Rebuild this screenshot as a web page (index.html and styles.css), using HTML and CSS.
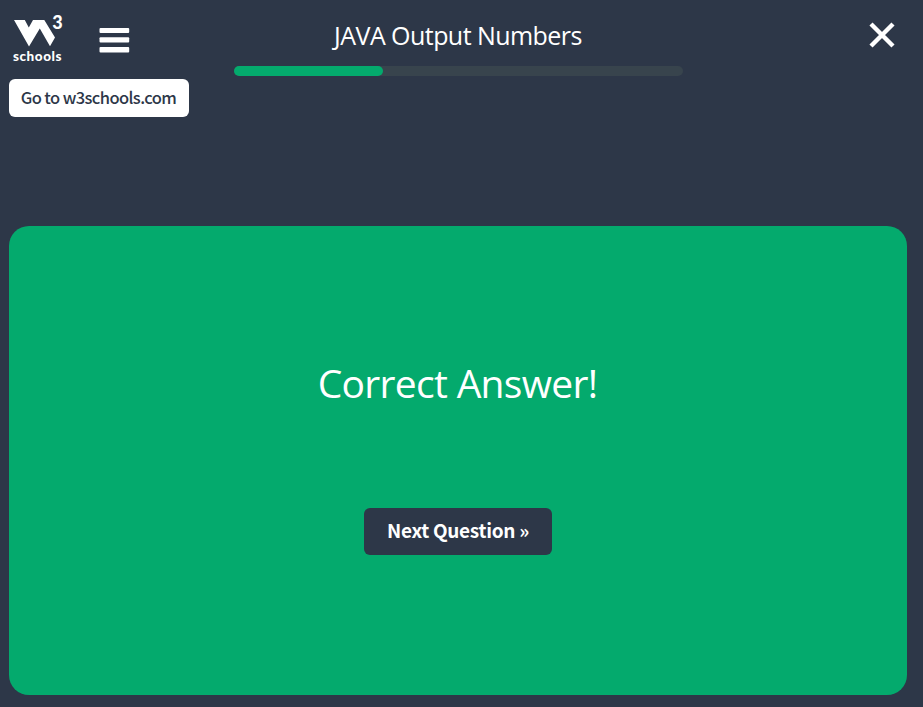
FILE: index.html
```html
<!DOCTYPE html>
<html lang="en">
<head>
<meta charset="utf-8">
<title>JAVA Output Numbers</title>
<link rel="stylesheet" href="styles.css">
</head>
<body>
<header class="header">
  <div class="brand">
    <a class="logo" aria-label="W3Schools">
      <svg width="60" height="56" viewBox="9 10 60 56">
        <path fill="#fff" d="M14 20H24.8L28.8 27.6 33 20H44.3L55 37.4 50 46.2 39.8 28.6 29 46.4Z"/>
        <text class="logo-three" x="52.2" y="29">3</text>
        <text class="logo-name" x="13" y="61">schools</text>
      </svg>
    </a>
    <svg class="menu" width="31" height="26" viewBox="0 0 31 26">
      <g fill="#fff"><rect x="0.5" y="1" width="29.7" height="5" rx="1"/><rect x="0.5" y="10.2" width="29.7" height="5.3" rx="1"/><rect x="0.5" y="20" width="29.7" height="5.4" rx="1"/></g>
    </svg>
  </div>
  <div class="heading">
    <h1 class="title">JAVA Output Numbers</h1>
    <div class="track"><div class="progress"></div></div>
  </div>
  <svg class="close" width="26" height="26" viewBox="0 0 26 26">
    <path d="M2 2 24 24M24 2 2 24" stroke="#fff" stroke-width="4.4"/>
  </svg>
</header>
<a class="home">Go to w3schools.com</a>
<main class="card">
  <h2 class="result">Correct Answer!</h2>
  <button class="next">Next Question »</button>
</main>
</body>
</html>
```
FILE: styles.css
```css
* { box-sizing: border-box; }
body {
  margin: 0;
  height: 707px;
  padding: 10px 16px 0 9px;
  background: #2d3748;
  color: #fff;
  font-family: "Open Sans", "Noto Sans", sans-serif;
  overflow: hidden;
}
.header {
  display: grid;
  grid-template-columns: 225px 449px 1fr;
  height: 69px;
}
.brand { display: flex; }
.logo { width: 60px; height: 56px; }
.logo svg { display: block; }
.logo-three { font: 900 18px Lato, sans-serif; fill: #fff; }
.logo-name { font: 900 13.5px Lato, sans-serif; letter-spacing: 0.55px; fill: #fff; }
.menu { margin: 17px 0 0 30px; }
.heading { text-align: center; }
.title {
  margin: 7px 0 0;
  height: 49px;
  padding-right: 1px;
  line-height: 36px;
  font-size: 25px;
  font-weight: 400;
  letter-spacing: -0.55px;
}
.track { height: 10px; border-radius: 5px; background: #38444d; }
.progress { width: 149px; height: 10px; border-radius: 5px; background: #04aa6d; }
.close { justify-self: end; margin: 12px 12px 0 0; }
.home, .next { font-family: "Noto Sans CJK SC", sans-serif; }
.home {
  display: flex;
  align-items: center;
  justify-content: center;
  width: 180px;
  height: 38px;
  padding: 0 1px 3px 0;
  border-radius: 6px;
  background: #fff;
  color: #2d3748;
  font-size: 16.5px;
  font-weight: 500;
  letter-spacing: -0.6px;
  white-space: nowrap;
}
.card {
  display: flex;
  flex-direction: column;
  align-items: center;
  height: 469px;
  margin-top: 109px;
  border-radius: 20px;
  background: #04aa6d;
}
.result {
  margin: 130px 0 0;
  height: 152px;
  padding-right: 1px;
  line-height: 54px;
  font-size: 39px;
  font-weight: 400;
  letter-spacing: -0.7px;
}
.next {
  width: 188px;
  height: 47px;
  padding: 0 0 5px;
  border: 0;
  border-radius: 6px;
  background: #2d3748;
  color: #fff;
  font-size: 19px;
  font-weight: 700;
  letter-spacing: -0.3px;
  white-space: nowrap;
}
```
